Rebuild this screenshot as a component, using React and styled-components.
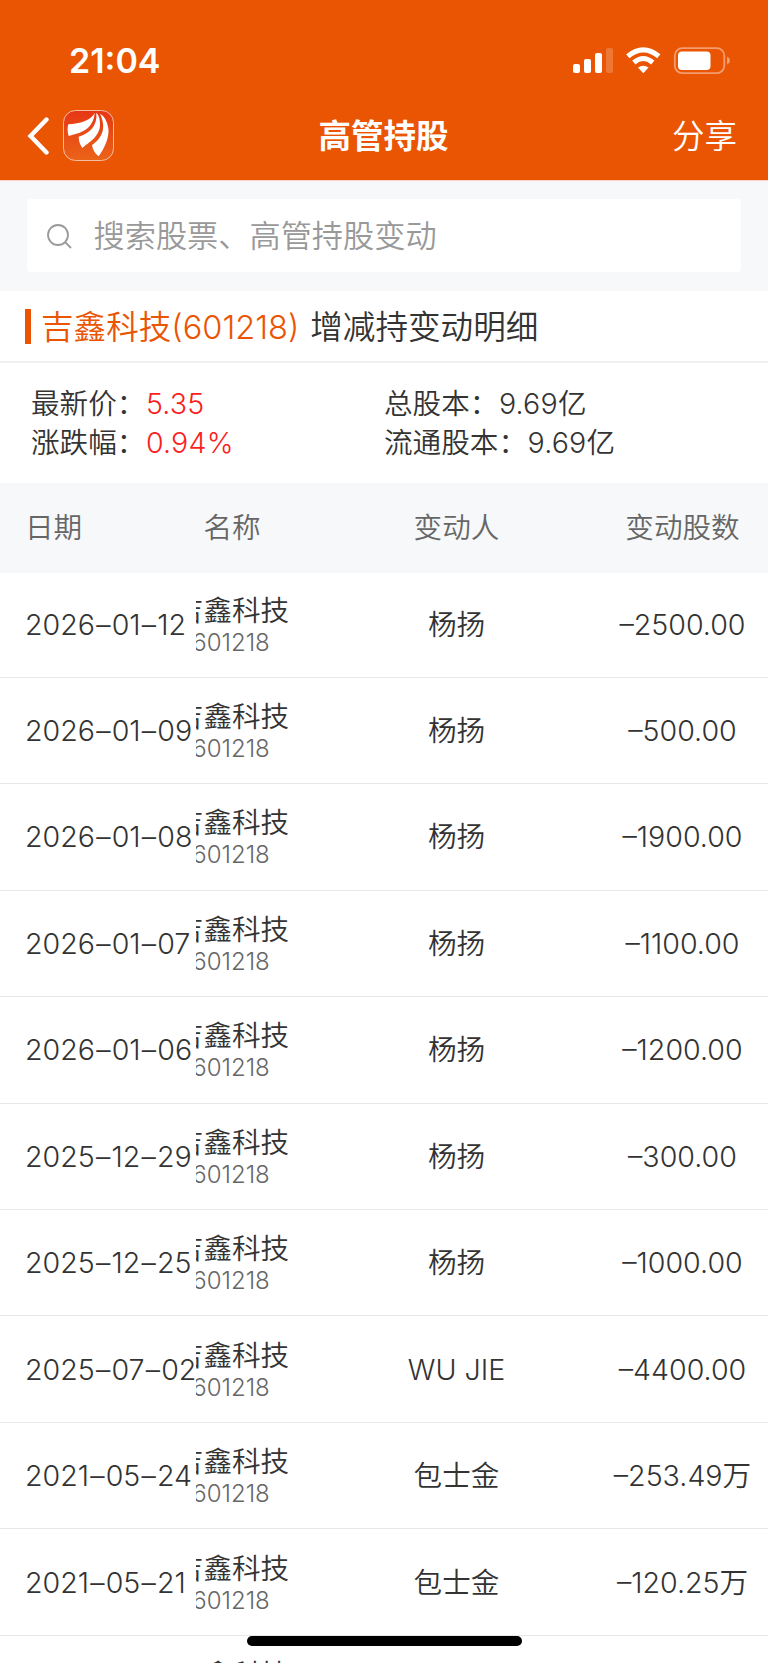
import styled, { createGlobalStyle } from 'styled-components';

const GlobalStyle = createGlobalStyle`
  * {
    box-sizing: border-box;
  }

  body {
    margin: 0;
    background: #fff;
    overflow: hidden;
  }
`;

const holdings = [
  { date: '2026–01–12', person: '杨扬', amount: '–2500.00' },
  { date: '2026–01–09', person: '杨扬', amount: '–500.00' },
  { date: '2026–01–08', person: '杨扬', amount: '–1900.00' },
  { date: '2026–01–07', person: '杨扬', amount: '–1100.00' },
  { date: '2026–01–06', person: '杨扬', amount: '–1200.00' },
  { date: '2025–12–29', person: '杨扬', amount: '–300.00' },
  { date: '2025–12–25', person: '杨扬', amount: '–1000.00' },
  { date: '2025–07–02', person: 'WU JIE', amount: '–4400.00' },
  { date: '2021–05–24', person: '包士金', amount: '–253.49', unit: '万' },
  { date: '2021–05–21', person: '包士金', amount: '–120.25', unit: '万' },
  { date: '', person: '', amount: '' },
];

const Page = styled.div`
  position: relative;
  width: 768px;
  height: 1663px;
  overflow: hidden;
  background: #fff;
  color: #333;
  font-family: Inter, 'Noto Sans CJK SC', sans-serif;
  font-size: 28.6px;
  font-weight: 350;
  line-height: 40px;
  white-space: nowrap;
`;

const Header = styled.header`
  height: 180px;
  background: #ea5504;
  color: #fff;
`;

const StatusBar = styled.div`
  display: flex;
  align-items: center;
  height: 91px;
  padding: 31px 38px 0 69px;
`;

const Time = styled.div`
  flex: 1;
  font-size: 34px;
  font-weight: 600;
  line-height: 60px;
`;

const NavBar = styled.div`
  display: grid;
  grid-template-columns: 1fr auto 1fr;
  align-items: center;
  height: 89px;
  padding: 0 31px 0 27px;
`;

const NavLeft = styled.div`
  display: flex;
  align-items: center;
  gap: 13px;
`;

const NavTitle = styled.h1`
  margin: 0;
  padding: 3px 0 0 3px;
  font-size: 32.5px;
  font-weight: 600;
  line-height: 48px;
`;

const Share = styled.div`
  justify-self: end;
  padding-top: 2px;
  font-size: 32.5px;
  line-height: 48px;
`;

const SearchArea = styled.div`
  height: 111px;
  padding: 19px 27px;
  background: #f6f8fa;
  border-top: 1px solid #f8d4c2;
`;

const SearchBox = styled.div`
  display: flex;
  align-items: center;
  gap: 21.5px;
  height: 73px;
  margin-top: -1px;
  padding-left: 19px;
  border-radius: 4px;
  background: #fff;
  color: #999;
  font-size: 31.2px;
`;

const SectionTitle = styled.h2`
  display: flex;
  align-items: center;
  height: 72px;
  margin: 0;
  padding: 0 25px;
  border-bottom: 2px solid #f0f0f0;
  font-size: 32.6px;
  font-weight: 350;
  line-height: 43px;

  &::before {
    content: '';
    width: 6px;
    height: 35px;
    margin-right: 10px;
    background: #ea5504;
  }
`;

const TitleText = styled.span`
  padding-top: 2px;
`;

const Stock = styled.span`
  margin-right: 11px;
  color: #ea5504;
`;

const Summary = styled.div`
  display: grid;
  grid-template-columns: 353px 1fr;
  grid-auto-rows: 39px;
  height: 120px;
  padding: 21px 31px;
  line-height: 39px;
`;

const Value = styled.span`
  margin-left: 0.5px;
  letter-spacing: 0.2px;
  color: ${({ $up }) => ($up ? '#fa1e1e' : 'inherit')};
`;

const TableRow = styled.div`
  display: grid;
  grid-template-columns: 196px 120px 281px 171px;
  align-items: center;
  height: ${({ $height }) => $height || 106.45}px;
  padding-top: 1px;
  border-bottom: 1px solid #e8e8e8;
`;

const TableHead = styled(TableRow)`
  padding-top: 0;
  border: 0;
  background: #f6f8fa;
  color: #666;
`;

const DateCell = styled.div`
  padding-left: 25px;
`;

const Dash = styled.span`
  margin: 0 1.2px;
`;

const NameCell = styled.div`
  overflow: hidden;
`;

const NameContent = styled.div`
  width: 116px;
  margin-left: -22px;
  text-align: center;
  line-height: ${({ $lineHeight }) => $lineHeight || 33}px;
`;

const StockName = styled.div`
  padding-top: 2px;
`;

const Code = styled.div`
  padding-right: 2px;
  color: #666;
  font-size: 24px;
  line-height: 31px;
`;

const CenterCell = styled.div`
  text-align: center;
`;

const HomeIndicator = styled.div`
  position: absolute;
  bottom: 17px;
  left: 247px;
  width: 275px;
  height: 10px;
  border-radius: 5px;
  background: #000;
`;

const StatusIcons = () => (
  <svg width="160" height="28" viewBox="0 0 160 28" fill="#fff">
    <rect x="3" y="17" width="7" height="9" rx="2" />
    <rect x="14" y="12" width="7" height="14" rx="2" />
    <rect x="25" y="6" width="7" height="20" rx="2" />
    <rect x="36" y="1" width="7" height="25" rx="2" opacity="0.2" />
    <g fill="none" stroke="#fff" strokeWidth="5">
      <path d="M57.8 9.2 Q73.3 -3.5 88.8 9.2" />
      <path d="M63.8 15.5 Q73.3 7.5 82.8 15.5" />
    </g>
    <path d="M68 20.6 Q73.3 17 78.6 20.6 L73.3 26.2Z" />
    <rect
      x="104.8"
      y="1.2"
      width="49.5"
      height="25"
      rx="7.5"
      fill="none"
      stroke="#fff"
      strokeWidth="1.8"
      opacity="0.42"
    />
    <rect x="108" y="4.5" width="32.5" height="18.5" rx="4" />
    <path d="M157 9.5 Q160 11 160 13.5 Q160 16 157 17.5Z" opacity="0.45" />
  </svg>
);

const BackIcon = () => (
  <svg width="23" height="38" viewBox="0 0 23 38">
    <path
      d="M19.5 2.5 L3.5 19 L19.5 35.5"
      fill="none"
      stroke="#fff"
      strokeWidth="4.4"
      strokeLinecap="round"
      strokeLinejoin="miter"
    />
  </svg>
);

const Logo = () => (
  <svg width="51" height="51" viewBox="190 270 153 153">
    <defs>
      <linearGradient id="logo-bg" x1="0" y1="0" x2="0" y2="1">
        <stop offset="0" stopColor="#e63614" />
        <stop offset="1" stopColor="#eb6418" />
      </linearGradient>
    </defs>
    <rect
      x="191.5"
      y="271.5"
      width="150"
      height="150"
      rx="36"
      fill="url(#logo-bg)"
      stroke="#f7bda3"
      strokeWidth="3"
    />
    <g fill="#fff">
      <path d="M285 279 C272 303 242 310 206 313 Q201 329 207 348 C240 339 280 332 285 279Z" />
      <path d="M290 278 C294 316 271 339 237 350 Q237 368 248 384 C276 361 310 344 299 295 Q296 283 290 278Z" />
      <path d="M301 281 C321 324 308 354 277 375 Q280 397 297 409 C315 384 330 351 326 324 Q320 291 301 281Z" />
    </g>
  </svg>
);

const SearchIcon = () => (
  <svg width="26" height="26" viewBox="0 0 26 26">
    <g fill="none" stroke="#999" strokeWidth="1.8">
      <circle cx="12" cy="12" r="10" />
      <path d="M19 19 L25 25" />
    </g>
  </svg>
);

const HoldingDate = ({ date }) => {
  const [year, month, day] = date.split('–');

  return (
    <DateCell>
      {year}
      <Dash>–</Dash>
      {month}
      <Dash>–</Dash>
      {day}
    </DateCell>
  );
};

const App = () => (
  <Page>
    <GlobalStyle />
    <Header>
      <StatusBar>
        <Time>21:04</Time>
        <StatusIcons />
      </StatusBar>
      <NavBar>
        <NavLeft>
          <BackIcon />
          <Logo />
        </NavLeft>
        <NavTitle>高管持股</NavTitle>
        <Share>分享</Share>
      </NavBar>
    </Header>
    <SearchArea>
      <SearchBox>
        <SearchIcon />
        搜索股票、高管持股变动
      </SearchBox>
    </SearchArea>
    <SectionTitle>
      <TitleText>
        <Stock>吉鑫科技(601218)</Stock>
        增减持变动明细
      </TitleText>
    </SectionTitle>
    <Summary>
      <div>
        最新价：<Value $up>5.35</Value>
      </div>
      <div>
        总股本：<Value>9.69</Value>亿
      </div>
      <div>
        涨跌幅：<Value $up>0.94%</Value>
      </div>
      <div>
        流通股本：<Value>9.69</Value>亿
      </div>
    </Summary>
    <TableHead $height={90}>
      <DateCell>日期</DateCell>
      <NameCell>
        <NameContent $lineHeight={40}>名称</NameContent>
      </NameCell>
      <CenterCell>变动人</CenterCell>
      <CenterCell>变动股数</CenterCell>
    </TableHead>
    {holdings.map(({ date, person, amount, unit }, index) => (
      <TableRow key={index} $height={index ? 106.45 : 104.8}>
        {date ? <HoldingDate date={date} /> : <DateCell />}
        <NameCell>
          <NameContent>
            <StockName>吉鑫科技</StockName>
            <Code>601218</Code>
          </NameContent>
        </NameCell>
        <CenterCell>{person}</CenterCell>
        <CenterCell>
          {amount}
          {unit}
        </CenterCell>
      </TableRow>
    ))}
    <HomeIndicator />
  </Page>
);

export default App;
